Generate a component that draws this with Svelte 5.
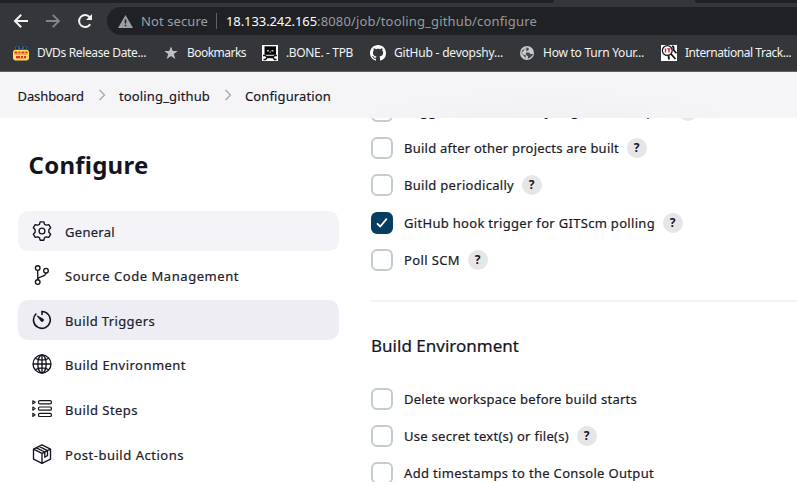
<script>
  const bookmarks = [
    { icon: 'dvd', label: 'DVDs Release Date...', width: 109, gap: 17 },
    { icon: 'star', label: 'Bookmarks', width: 59, gap: 16 },
    { icon: 'bone', label: '.BONE. - TPB', width: 67, gap: 17 },
    { icon: 'github', label: 'GitHub - devopshy...', width: 109, gap: 16 },
    { icon: 'globe', label: 'How to Turn Your...', width: 101, gap: 17 },
    { icon: 'track', label: 'International Track...', width: 106, gap: 0 },
  ];
  const nav = [
    { icon: 'gear', label: 'General', width: 50, state: 'hover' },
    { icon: 'branch', label: 'Source Code Management', width: 174 },
    { icon: 'timer', label: 'Build Triggers', width: 90, state: 'active' },
    { icon: 'world', label: 'Build Environment', width: 121 },
    { icon: 'steps', label: 'Build Steps', width: 73 },
    { icon: 'box', label: 'Post-build Actions', width: 119 },
  ];
  const triggers = [
    { label: 'Trigger builds remotely (e.g., from scripts)', width: 266, help: true },
    { label: 'Build after other projects are built', width: 215, help: true },
    { label: 'Build periodically', width: 110, help: true },
    { label: 'GitHub hook trigger for GITScm polling', width: 251, help: true, checked: true },
    { label: 'Poll SCM', width: 56, help: true },
  ];
  const environment = [
    { label: 'Delete workspace before build starts', width: 233 },
    { label: 'Use secret text(s) or file(s)', width: 165, help: true },
    { label: 'Add timestamps to the Console Output', width: 250 },
  ];

  // Tracks the letters so that a label fills exactly the given width.
  function fit(node, width) {
    node.style.display = 'inline-block';
    node.style.whiteSpace = 'pre';
    const natural = node.getBoundingClientRect().width;
    node.style.letterSpacing = `${(width - natural) / node.textContent.length}px`;
    node.style.width = `${width}px`;
  }
</script>

{#snippet option(item)}
  <label class="option">
    <span class="check" class:checked={item.checked}>
      {#if item.checked}
        <svg width="12" height="12" viewBox="0 0 12 12"><path d="M1.500 6.800 4.300 9.500 10.400 2.200" fill="none" stroke="#fff" stroke-width="1.800" stroke-linecap="round" stroke-linejoin="round" /></svg>
      {/if}
    </span>
    <span class="label" use:fit={item.width}>{item.label}</span>
    {#if item.help}<span class="help">?</span>{/if}
  </label>
{/snippet}

<div class="window">
  <div class="tabs"><i class="left"></i><i class="right"></i></div>
  <div class="toolbar">
    <div class="buttons">
      <svg width="16" height="16" viewBox="0 0 16 16" fill="none" stroke="#f1f3f4" stroke-width="2"><path d="M15 8H2.400M8.200 1.800 2 8l6.200 6.200" /></svg>
      <svg width="16" height="16" viewBox="0 0 16 16" fill="none" stroke="#85868a" stroke-width="1.800"><path d="M1 8h12.600M7.800 1.800 14 8l-6.200 6.200" /></svg>
      <svg width="16" height="16" viewBox="0 0 16 16"><path d="M13.200 11.200A6 6 0 1 1 12.700 4.200" fill="none" stroke="#f1f3f4" stroke-width="2" /><path d="M15 1v6H9z" fill="#f1f3f4" /></svg>
    </div>
    <div class="omnibox">
      <svg width="15" height="13" viewBox="0 0 15 13"><path d="M7.500 0 15 13H0z" fill="#9aa0a6" /><path d="M6.700 4.500h1.600v4H6.700zM6.700 9.700h1.600v1.600H6.700z" fill="#202124" /></svg>
      <span class="insecure" use:fit={67}>Not secure</span>
      <i></i>
      <span class="host" use:fit={91}>18.133.242.165</span><span class="path" use:fit={220}>:8080/job/tooling_github/configure</span>
    </div>
  </div>
  <div class="bookmarks">
    {#each bookmarks as b}
      <div class="bookmark" style:margin-right="{b.gap}px">
        <svg width="16" height="16" viewBox="0 0 16 16">
          {#if b.icon === 'dvd'}
            <path d="M2 1.500h12v4H2z" fill="#286489" /><path d="M3 2h2v2H3zM7 1.500h2v2H7zM11 2h2v2h-2z" fill="#172d46" />
            <path d="M1 5h14l1 2v7l-2 1.500H2L0 14V7z" fill="#ffe05c" />
            <path d="M1.500 7.500h3M5.500 7.500h2M8.500 7.500h3M12.500 7.500h2M3 12h4M8 12h2M11 12h2" stroke="#e12d24" stroke-width="2" />
            <path d="M1.500 9.300h13M3 13.600h10" stroke="#ef8240" stroke-width=".8" />
          {:else if b.icon === 'star'}
            <path d="M8 1.500 9.800 6h4.900l-3.900 3 1.500 4.900L8 11l-4.300 2.900L5.200 9 1.300 6h4.900z" fill="#bdc1c6" />
          {:else if b.icon === 'bone'}
            <path d="M0 0h16v16H0z" fill="#fff" /><path d="M2.500 1.300h11.500v8.500H2.500z" fill="#050505" /><path d="M5 5h2v1.500H5zM9.500 5h2v1.500h-2zM7.700 6.500h1V8h-1z" fill="#bbb" />
            <path d="M1 10.500h2l1.500 1h7l1.500-1h2M1.500 14.500h2l1.500-2h6l1.500 2h2" fill="none" stroke="#111" stroke-width="1.500" />
          {:else if b.icon === 'github'}
            <path fill="#fff" d="M8 0C3.580 0 0 3.580 0 8c0 3.540 2.290 6.530 5.470 7.590.4.070.550-.170.550-.380 0-.190-.010-.820-.010-1.490-2.010.370-2.530-.490-2.690-.940-.090-.230-.480-.940-.820-1.130-.280-.150-.680-.520-.010-.530.630-.010 1.080.580 1.230.820.720 1.210 1.870.870 2.330.660.070-.520.280-.870.510-1.070-1.780-.200-3.640-.890-3.640-3.950 0-.870.310-1.590.820-2.150-.080-.200-.360-1.020.080-2.120 0 0 .670-.210 2.200.820.640-.180 1.320-.270 2-.270s1.360.090 2 .270c1.530-1.040 2.200-.820 2.200-.820.440 1.100.160 1.920.080 2.120.510.560.820 1.270.820 2.150 0 3.070-1.870 3.750-3.650 3.950.290.250.540.730.540 1.480 0 1.070-.010 1.930-.010 2.200 0 .210.150.460.550.380A8.010 8.010 0 0 0 16 8c0-4.420-3.580-8-8-8z" />
          {:else if b.icon === 'globe'}
            <circle cx="8" cy="8" r="7" fill="#c8cacc" /><path d="M7.500 2.200 10 3.500 9.300 5.500 7 6v1.500h3l1.500 1.500H14c-.5 2-2.500 4-5.300 4.700L9 11.500 7.500 10H5L2 7.300C2.700 9 4 9.500 4.500 10.500L6.500 13M7.500 2.200 5.500 4 3 5.500 2.500 8z" fill="#45474b" />
          {:else}
            <path d="M0 0h16v16H0z" fill="#fff" /><circle cx="6.300" cy="5.500" r="4.900" fill="#fff" stroke="#151515" stroke-width="1.200" /><path d="M4.500 3.400v4M6.200 3.900h3.300M7.900 3.900v3.500" fill="none" stroke="#d71f2a" stroke-width="1.400" />
            <path d="M11 1.500c2.500-.5 1 2.500 2 4l2.500 2.700M10 9l4.500 5M7.500 10.500 8 14.500" fill="none" stroke="#111" stroke-width="1.800" />
          {/if}
        </svg>
        <span use:fit={b.width}>{b.label}</span>
      </div>
    {/each}
  </div>

  <div class="page">
    <header>
      <span use:fit={66.5}>Dashboard</span>
      <svg width="8" height="12" viewBox="0 0 8 12"><path d="m1.500 1 5 5-5 5" /></svg>
      <span use:fit={91}>tooling_github</span>
      <svg width="8" height="12" viewBox="0 0 8 12"><path d="m1.500 1 5 5-5 5" /></svg>
      <span use:fit={86}>Configuration</span>
    </header>
    <aside>
      <h1><span use:fit={120}>Configure</span></h1>
      <nav>
        {#each nav as n}
          <div class="item {n.state ?? ''}">
            <svg width="20" height="20" viewBox="0 0 20 20">
              {#if n.icon === 'gear'}
                <circle cx="10" cy="10" r="2.900" />
                <path d="M8.200.800h3.600l.7 2.500q1 .3 1.700.900l2.600-.6 1.900 3.200-1.900 1.900q.2 1.300 0 2.600l1.900 1.900-1.900 3.200-2.600-.6q-.7.6-1.700.9l-.7 2.500H8.200l-.7-2.500q-1-.3-1.700-.9l-2.600.6-1.900-3.200 1.900-1.900q-.2-1.300 0-2.600L1.300 6.800l1.900-3.200 2.600.6q.7-.6 1.700-.9z" stroke-linejoin="round" />
              {:else if n.icon === 'branch'}
                <circle cx="5.700" cy="3" r="2.300" /><circle cx="14" cy="5.700" r="2.300" /><circle cx="5.700" cy="17" r="2.300" />
                <path d="M5.700 5.300v9.400M14 8c-.2 4.600-8.300 2.600-8.300 6.700" />
              {:else if n.icon === 'timer'}
                <path d="M10 4.500V1.500A8.400 8.400 0 1 1 3.900 4" stroke-width="1.600" stroke-linecap="round" /><path d="m5.200 5.800 5.900 3.300a1.400 1.400 0 0 1-2 2z" fill="#14141f" stroke-width=".8" />
              {:else if n.icon === 'world'}
                <circle cx="10" cy="10" r="9" /><ellipse cx="10" cy="10" rx="4.200" ry="9" /><path d="M10 1v18M1 10h18M3.300 4.300c3.600 2.400 9.800 2.400 13.400 0M3.300 15.700c3.600-2.400 9.800-2.400 13.400 0" />
              {:else if n.icon === 'steps'}
                {#each [3.3, 9.6, 15.9] as y}
                  <rect x="6.500" y={y - 1.6} width="12.900" height="3.200" rx="1.300" stroke-width="1.200" />
                  <path d="M.8 {y - 1.6} 3.200 {y} .8 {y + 1.6}z" stroke-width="1.100" stroke-linejoin="round" />
                {/each}
              {:else}
                <path d="m10 .9 8.500 4.300v9.900L10 19.300l-8.500-4.200V5.200zM1.500 5.200 10 9.400l8.500-4.200M10 9.400v9.900M4.300 3.800l8.500 4.200v5.200l2.700-1.700V6.700L7.100 2.400" stroke-linejoin="round" />
              {/if}
            </svg>
            <span use:fit={n.width}>{n.label}</span>
          </div>
        {/each}
      </nav>
    </aside>
    <main>
      {#each triggers as item}{@render option(item)}{/each}
      <hr />
      <h2><span use:fit={148}>Build Environment</span></h2>
      {#each environment as item}{@render option(item)}{/each}
    </main>
  </div>
</div>

<style>
  :global(body) { margin: 0; overflow: hidden; }
  .window { width: 797px; height: 482px; overflow: hidden; background: #fff; color: #14141f; font-family: 'Noto Sans', 'Open Sans', sans-serif; display: flex; flex-direction: column; }
  .window * { box-sizing: border-box; }
  .window svg { display: block; flex: none; }
  .tabs { height: 3px; flex: none; background: #35363a; display: flex; justify-content: space-between; }
  .tabs i { background: #202124; height: 3px; }
  .left { width: 554px; border-bottom-right-radius: 4px; }
  .right { width: 102px; border-bottom-left-radius: 4px; }
  .toolbar { height: 36px; flex: none; background: #35363a; display: flex; align-items: center; }
  .buttons { width: 107px; padding-left: 13px; display: flex; gap: 16px; }
  .omnibox { flex: 1; height: 28px; background: #202124; border-radius: 14px 0 0 14px; display: flex; align-items: center; padding-left: 11px; font-size: 13px; line-height: 28px; white-space: nowrap; }
  .omnibox i { width: 1px; height: 16px; background: #5f6368; margin: 0 9px 0 8px; }
  .insecure { margin-left: 8px; color: #9aa0a6; }
  .host { color: #fff; }
  .path { color: #969ba1; }
  .bookmarks { height: 33px; flex: none; background: #35363a; border-bottom: 1px solid #626064; display: flex; align-items: center; padding: 0 0 4px 13px; font-size: 12px; color: #f1f3f4; }
  .bookmark { display: flex; align-items: center; gap: 8px; flex: none; line-height: 16px; }
  .page { position: relative; flex: 1; display: flex; overflow: hidden; }
  header { position: absolute; inset: 0 0 auto; height: 46px; z-index: 2; background: radial-gradient(ellipse 190px 30px at 545px 46px, #f1f1f4, rgba(241, 241, 244, 0)) #f5f5f8; display: flex; align-items: center; padding: 2px 0 0 17.500px; font-size: 13px; line-height: 18px; -webkit-text-stroke: .15px; }
  header svg { margin: -3px 13.500px 0; fill: none; stroke: #a4a4b8; stroke-width: 1.3; }
  aside { width: 371px; padding: 73px 32px 0 18px; flex: none; }
  h1 { margin: 0 0 25.600px 10.500px; font-size: 24px; line-height: 40px; font-weight: 700; }
  nav { display: grid; gap: 4.600px; }
  .item { height: 40px; border-radius: 10px; padding-left: 14px; display: flex; align-items: center; gap: 13px; font-size: 13px; line-height: 18px; color: #20202c; -webkit-text-stroke: .2px; }
  .item span { margin-top: 2px; }
  .item svg { fill: none; stroke: #14141f; stroke-width: 1.35; }
  .hover { background: #f4f4f8; }
  .active { background: #ededf3; }
  main { flex: 1; padding-top: 20px; font-size: 13px; }
  .option { height: 37.330px; display: flex; align-items: center; color: #1b1b27; -webkit-text-stroke: .2px; }
  .check { width: 22px; height: 22px; border: 2px solid #c3ccd1; border-radius: 6px; margin-right: 11px; display: grid; place-items: center; }
  .checked { background: #073d60; border-color: #073d60; }
  .help { width: 20px; height: 20px; border-radius: 50%; background: #e6e6e7; margin-left: 7.500px; text-align: center; font-size: 12px; line-height: 20px; font-weight: 700; color: #14141f; -webkit-text-stroke: 0; }
  hr { border: 0; height: 2px; margin: 21px 0 29px; background: #f2f2f7; }
  h2 { margin: 0 0 19.500px; font-size: 17px; line-height: 30px; font-weight: 400; -webkit-text-stroke: .2px; }
</style>
